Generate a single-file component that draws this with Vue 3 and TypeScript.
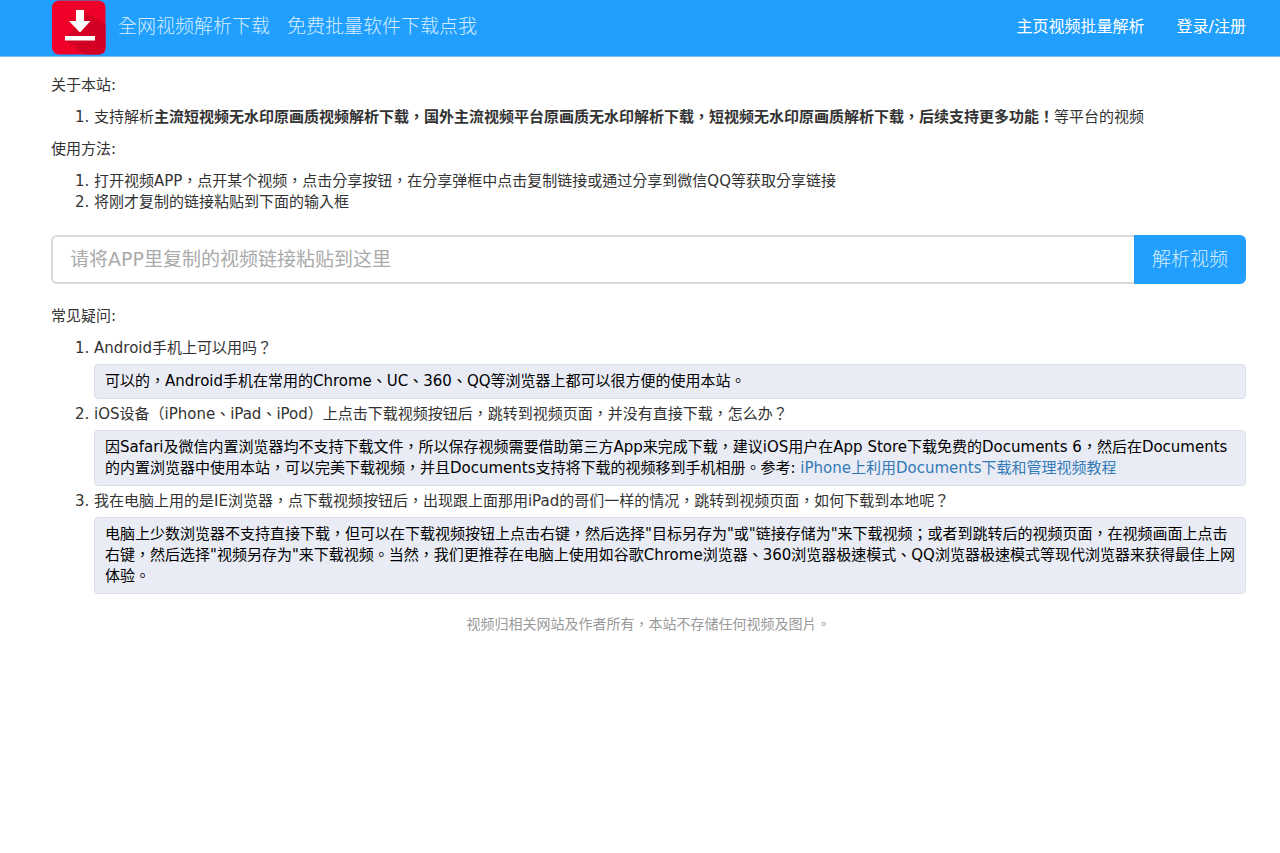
<script setup lang="ts">
import { ref } from 'vue'

interface Answer {
  question: string
  answer: string
  link?: string
}

const url = ref('')

const steps: string[] = [
  '打开视频APP，点开某个视频，点击分享按钮，在分享弹框中点击复制链接或通过分享到微信QQ等获取分享链接',
  '将刚才复制的链接粘贴到下面的输入框',
]

const faq: Answer[] = [
  {
    question: 'Android手机上可以用吗？',
    answer: '可以的，Android手机在常用的Chrome、UC、360、QQ等浏览器上都可以很方便的使用本站。',
  },
  {
    question: 'iOS设备（iPhone、iPad、iPod）上点击下载视频按钮后，跳转到视频页面，并没有直接下载，怎么办？',
    answer:
      '因Safari及微信内置浏览器均不支持下载文件，所以保存视频需要借助第三方App来完成下载，建议iOS用户在App Store下载免费的Documents 6，然后在Documents的内置浏览器中使用本站，可以完美下载视频，并且Documents支持将下载的视频移到手机相册。参考: ',
    link: 'iPhone上利用Documents下载和管理视频教程',
  },
  {
    question: '我在电脑上用的是IE浏览器，点下载视频按钮后，出现跟上面那用iPad的哥们一样的情况，跳转到视频页面，如何下载到本地呢？',
    answer:
      '电脑上少数浏览器不支持直接下载，但可以在下载视频按钮上点击右键，然后选择"目标另存为"或"链接存储为"来下载视频；或者到跳转后的视频页面，在视频画面上点击右键，然后选择"视频另存为"来下载视频。当然，我们更推荐在电脑上使用如谷歌Chrome浏览器、360浏览器极速模式、QQ浏览器极速模式等现代浏览器来获得最佳上网体验。',
  },
]
</script>

<template>
  <div class="page">
    <header class="navbar">
      <a class="logo" href="#" aria-label="首页">
        <svg viewBox="0 0 55 55" width="55" height="55" aria-hidden="true">
          <rect x="1" y="0.5" width="53.5" height="54" rx="7" fill="#ef0029" />
          <path d="M34 12 54.5 24.500V47.500Q54.500 54.500 47.500 54.500H34L14 40.500Z" fill="#d30024" />
          <path d="M25 10h8v11h6.500L29 32.500 18 21h7Z" fill="#fff" />
          <rect x="14" y="36" width="30" height="4.500" fill="#fff" />
        </svg>
      </a>
      <a class="brand" href="#">全网视频解析下载</a>
      <a class="brand" href="#">免费批量软件下载点我</a>
      <nav class="links">
        <a href="#">主页视频批量解析</a>
        <a href="#">登录/注册</a>
      </nav>
    </header>

    <main class="content">
      <p>关于本站:</p>
      <ol>
        <li>支持解析<b>主流短视频无水印原画质视频解析下载，国外主流视频平台原画质无水印解析下载，短视频无水印原画质解析下载，后续支持更多功能！</b>等平台的视频</li>
      </ol>
      <p>使用方法:</p>
      <ol>
        <li v-for="step in steps" :key="step">{{ step }}</li>
      </ol>

      <form class="parse" @submit.prevent>
        <input v-model="url" type="text" aria-label="视频链接" placeholder="请将APP里复制的视频链接粘贴到这里" />
        <button type="submit">解析视频</button>
      </form>

      <p>常见疑问:</p>
      <ol class="faq">
        <li v-for="item in faq" :key="item.question">
          {{ item.question }}
          <div class="answer">{{ item.answer }}<a v-if="item.link" href="#">{{ item.link }}</a></div>
        </li>
      </ol>
    </main>

    <footer>视频归相关网站及作者所有，本站不存储任何视频及图片。</footer>
  </div>
</template>

<style>
body {
  margin: 0;
  background: #fff;
}
</style>

<style scoped>
.page {
  font: 15px/21px "DejaVu Sans", "Noto Sans CJK TC", sans-serif;
  color: #333;
}

a {
  color: #337ab7;
  text-decoration: none;
}

.navbar {
  display: flex;
  align-items: flex-start;
  height: 56px;
  padding: 0 34px 0 51px;
  line-height: 53px;
  background: #219fff;
  border-bottom: 1px solid #79bff5;
}

.logo {
  height: 55px;
  margin-right: 12px;
}

.logo svg {
  display: block;
}

.brand {
  margin-right: 17px;
  font-size: 19px;
  font-weight: 300;
  color: #d3ecff;
}

.links {
  display: flex;
  gap: 32px;
  margin-left: auto;
  font-size: 16px;
}

.links a {
  color: #fff;
}

.content {
  padding: 18px 34px 0 51px;
}

p {
  margin: 0 0 11px;
}

ol {
  margin: 0 0 11px;
  padding-left: 43px;
}

.parse {
  display: flex;
  height: 49px;
  margin: 22px 0;
}

.parse input {
  flex: 1;
  min-width: 0;
  box-sizing: border-box;
  padding: 0 17px;
  font: inherit;
  font-size: 19px;
  color: #555;
  background: #fff;
  border: 2px solid #d9d9d9;
  border-right: 0;
  border-radius: 6px 0 0 6px;
  outline: 0;
}

.parse input::placeholder {
  color: #aaa;
  opacity: 1;
}

.parse button {
  padding: 0 18px;
  font: inherit;
  font-size: 19px;
  font-weight: 300;
  color: #d9eeff;
  background: #219fff;
  border: 0;
  border-radius: 0 6px 6px 0;
}

.faq {
  margin-bottom: 20px;
}

.answer {
  margin: 5px 0;
  padding: 6px 8px 6px 10px;
  color: #000;
  background: #e9ecf4;
  border: 1px solid #d9deea;
  border-radius: 4px;
}

footer {
  padding: 0 34px 0 51px;
  font-size: 14px;
  line-height: 20px;
  text-align: center;
  color: #999;
}
</style>
